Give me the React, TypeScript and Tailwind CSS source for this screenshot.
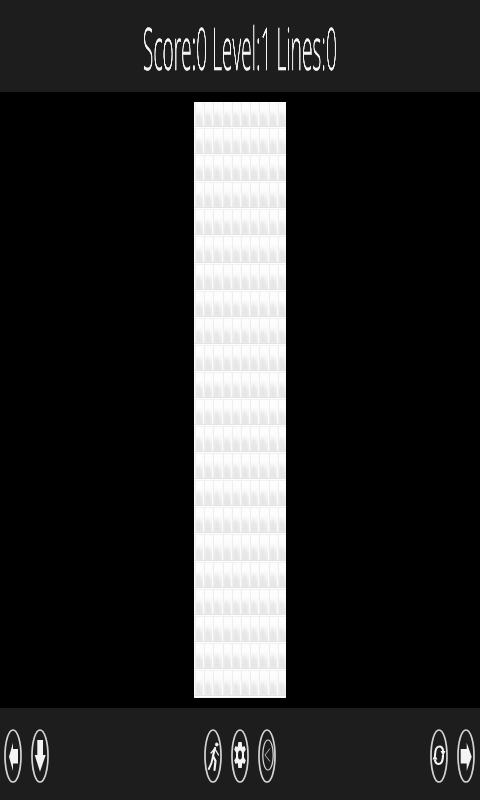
const FONT = "font-['Open_Sans',sans-serif]";

function Cell() {
  return (
    <div className="flex flex-col min-w-0 bg-[#fbfbfb]">
      <div className="flex-1 ml-px bg-gradient-to-b from-[#fdfdfd] from-25% to-[#ebebeb] flex items-end overflow-hidden border-l border-[#eeeeee]">
        <svg viewBox="0 0 8 20" className="w-full h-[17px] blur-[1px]" preserveAspectRatio="none">
          <path d="M-1 21 L-1 12 L2.5 4 L6 10 L7 21 Z" fill="#e3e3e3" opacity="0.7" />
        </svg>
      </div>
      <div className="h-px bg-[#e4e4e4]" />
      <div className="h-px bg-[#fdfdfd]" />
      <div className="h-px bg-[#f1f1f1]" />
    </div>
  );
}

function Oval({ children }: { children: React.ReactNode }) {
  return (
    <svg viewBox="0 0 18 54" className="w-[18px] h-[54px] shrink-0 text-[#e8e8e8]" fill="none">
      <ellipse cx="9" cy="27" rx="8" ry="26" stroke="currentColor" strokeWidth="1.7" opacity="0.9" />
      {children}
    </svg>
  );
}

export default function App() {
  const cells = Array.from({ length: 220 });
  return (
    <div className={`${FONT} w-[480px] h-[800px] flex flex-col bg-black overflow-hidden`}>
      <header className="h-[92px] shrink-0 bg-[#1d1d1d] flex items-center justify-center pt-[4px]">
        <span className="text-[58px] font-light text-[#f4f4f4] whitespace-nowrap scale-x-[0.33] leading-none will-change-transform [-webkit-text-stroke:0.5px_#f4f4f4]">
          Score:0 Level:1 Lines:0
        </span>
      </header>
      <main className="flex-1 flex items-center justify-center">
        <div className="w-[92px] h-[596px] grid grid-cols-10 grid-rows-22 bg-white">
          {cells.map((_, i) => (
            <Cell key={i} />
          ))}
        </div>
      </main>
      <footer className="h-[92px] shrink-0 bg-[#1d1d1d] flex items-center justify-between pl-[4px] pr-[5px] pt-[4px]">
        <div className="flex gap-[9px]">
          <Oval>
            <path d="M5 27.7 L9 13.7 V20 H14 V34.5 H9 V42 Z" fill="#f4f4f4" />
          </Oval>
          <Oval>
            <path d="M9 42.7 L3.7 26 H6.3 V11 H12 V26 H14.7 Z" fill="#f4f4f4" />
          </Oval>
        </div>
        <div className="flex gap-[9px]">
          <Oval>
            <g fill="none" stroke="#f4f4f4" strokeLinecap="round">
              <ellipse cx="12.7" cy="15.5" rx="1.5" ry="1.8" fill="#f4f4f4" strokeWidth="0.4" />
              <path d="M11 19 L9 27 L11.5 32 L10.5 41" strokeWidth="2.2" />
              <path d="M9 27 L7.5 34 L4.8 40" strokeWidth="1.9" />
              <path d="M10.5 20 L7 24 M11 20 L14.5 26" strokeWidth="1.3" />
            </g>
          </Oval>
          <Oval>
            <path
              d="M7.3 13 H10.7 L11.2 18 L13.5 17 L14.8 20.5 L13 23.5 V28.5 L14.8 31.5 L13.5 35 L11.2 34 L10.7 39 H7.3 L6.8 34 L4.5 35 L3.2 31.5 L5 28.5 V23.5 L3.2 20.5 L4.5 17 L6.8 18 Z M9 21.5 A2 4.5 0 0 0 9 30.5 A2 4.5 0 0 0 9 21.5 Z"
              fill="#f4f4f4"
              fillRule="evenodd"
            />
          </Oval>
          <Oval>
            <ellipse cx="10" cy="26" rx="5.2" ry="15" stroke="#dcdcdc" strokeWidth="1.2" />
            <path d="M12 19.5 L7 26 L12 32.5" stroke="#b4b4b4" strokeWidth="1" />
          </Oval>
        </div>
        <div className="flex gap-[9px]">
          <Oval>
            <g fill="none" stroke="#f4f4f4" strokeWidth="2.1">
              <path d="M5 27 C5 20 7 17.5 9.5 17.5 C11.5 17.5 12.7 19 13.2 22" />
              <path d="M13 26 C13 32.5 11 35 8.5 35 C6.5 35 5.3 33.5 4.8 30.5" />
            </g>
            <path d="M10.5 22 H15.5 L13.2 27 Z M2.5 30.5 H7.5 L4.8 25.5 Z" fill="#f4f4f4" />
          </Oval>
          <Oval>
            <path d="M14.7 27.7 L9.7 13.7 V20 H3.7 V34.5 H9.7 V42 Z" fill="#f4f4f4" />
          </Oval>
        </div>
      </footer>
    </div>
  );
}
